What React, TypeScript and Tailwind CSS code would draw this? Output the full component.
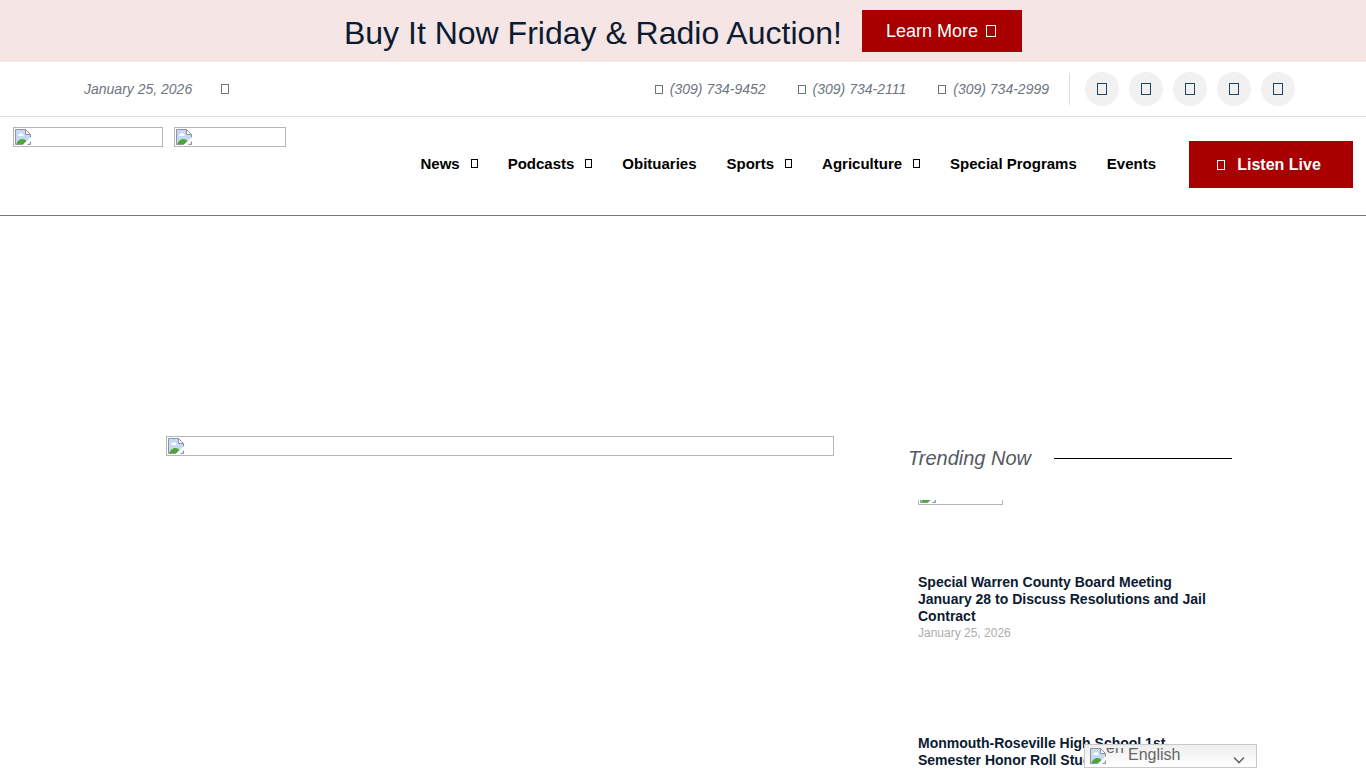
import { clsx } from "clsx";

type NavItem = {
  label: string;
  hasMenu?: boolean;
};

const navItems: NavItem[] = [
  { label: "News", hasMenu: true },
  { label: "Podcasts", hasMenu: true },
  { label: "Obituaries" },
  { label: "Sports", hasMenu: true },
  { label: "Agriculture", hasMenu: true },
  { label: "Special Programs" },
  { label: "Events" },
];

const phones = ["(309) 734-9452", "(309) 734-2111", "(309) 734-2999"];

const socials = ["Facebook", "Twitter", "Instagram", "YouTube", "Email"];

const stories = [
  {
    title: "Special Warren County Board Meeting January 28 to Discuss Resolutions and Jail Contract",
    date: "January 25, 2026",
    hasThumb: true,
  },
  {
    title: "Monmouth-Roseville High School 1st Semester Honor Roll Students",
    date: "January 25, 2026",
    hasThumb: false,
  },
];

// Hollow box shown where the icon font has no glyph.
function Glyph({ className }: { className: string }) {
  return <span aria-hidden="true" className={clsx("inline-block shrink-0 border border-current", className)} />;
}

function BrokenIcon({ className }: { className?: string }) {
  return (
    <svg aria-hidden="true" viewBox="0 0 16 16" className={clsx("block size-4 shrink-0", className)}>
      <path d="M0.5 0.5H10.500L15.500 5.500V15.500H0.500Z" fill="#c5d9f7" />
      <path d="M3 6.500c0-1.200 1-1.800 1.900-1.500C5.500 3.600 8 3.900 8 5.700c1 0 1 1.300 0 1.300H3.500Z" fill="#fff" />
      <path d="M1.500 15c.5-2.500 3-5 6-5 2 0 3.500 1 4 2.500L9 15Z" fill="#4ea63a" />
      <path d="M10.500 0.500V5.500H15.500Z" fill="#fff" />
      <path d="M0.500 15.500V0.500H10.500L15.500 5.500V15.500ZM10.500 0.500V5.500H15.500" fill="none" stroke="#8f9499" />
      <path d="M7.500 16 16 8V12L12 16Z" fill="#fff" />
    </svg>
  );
}

function ImageFrame({ className, label }: { className: string; label: string }) {
  return (
    <div role="img" aria-label={label} className={clsx("h-5 border border-[#b5b5b5] p-px", className)}>
      <BrokenIcon />
    </div>
  );
}

function PromoBanner() {
  return (
    <div className="flex items-center justify-center gap-5 bg-[#f6e5e5] py-[10px]">
      <h2 className="pt-1 text-[32px] leading-[38px] text-[#0b1b32]">Buy It Now Friday &amp; Radio Auction!</h2>
      <a href="#auction" className="flex h-[42px] items-center gap-2 bg-[#a80000] px-6 text-lg text-white">
        Learn More
        <Glyph className="mr-[2px] h-3 w-[10px]" />
      </a>
    </div>
  );
}

function TopBar() {
  return (
    <div className="flex items-center justify-between border-b border-[#dcdfe1] py-[10px] pr-[71px] pl-[84px] text-sm text-[#6b7680] italic">
      <div className="flex items-center gap-[29px]">
        <span>January 25, 2026</span>
        <Glyph className="h-[10px] w-2" />
      </div>
      <div className="flex items-center">
        <ul className="flex gap-8 pr-5">
          {phones.map((phone) => (
            <li key={phone}>
              <a href={`tel:${phone}`} className="flex items-center gap-[7px]">
                <Glyph className="h-[9px] w-2" />
                {phone}
              </a>
            </li>
          ))}
        </ul>
        <div className="h-8 border-l border-[#dcdfe1]" />
        <ul className="flex gap-[10px] pl-[15px]">
          {socials.map((name) => (
            <li key={name}>
              <a
                href={`#${name.toLowerCase()}`}
                aria-label={name}
                className="flex size-[34px] items-center justify-center rounded-full bg-[#f1f1f1] text-[#1d4262]"
              >
                <Glyph className="h-3 w-[10px]" />
              </a>
            </li>
          ))}
        </ul>
      </div>
    </div>
  );
}

function SiteHeader() {
  return (
    <header className="flex justify-between border-b border-[#74746f] px-[13px] pt-[10px] pb-[27px]">
      <div className="flex gap-[11px]">
        <ImageFrame className="w-[150px]" label="Station logo" />
        <ImageFrame className="w-28" label="Partner logo" />
      </div>
      <div className="flex items-center gap-[33px] pt-[14px]">
        <nav className="pb-[2px]">
          <ul className="flex gap-[30px] text-[15px] leading-5 font-bold text-black">
            {navItems.map((item) => (
              <li key={item.label}>
                <a href="#" className="flex items-center gap-[11px]">
                  {item.label}
                  {item.hasMenu ? <Glyph className="h-[9px] w-[7px]" /> : null}
                </a>
              </li>
            ))}
          </ul>
        </nav>
        <a
          href="#listen"
          className="flex h-[47px] w-[164px] items-center justify-center gap-3 bg-[#a80000] pr-1 text-base font-bold text-white"
        >
          <Glyph className="h-[10px] w-2" />
          Listen Live
        </a>
      </div>
    </header>
  );
}

function Trending() {
  return (
    <aside className="w-[324px] shrink-0">
      <div className="flex items-center gap-[23px]">
        <h2 className="text-xl leading-11 text-[#54595f] italic">Trending Now</h2>
        <div className="flex-1 border-t border-black" />
      </div>
      <div className="flex flex-col gap-5 px-[10px] pt-5">
        {stories.map((story) => (
          <article key={story.title}>
            <div className="h-16">
              {story.hasThumb ? (
                <div className="flex h-[5px] flex-col justify-end overflow-hidden">
                  <ImageFrame className="w-[85px] shrink-0" label={story.title} />
                </div>
              ) : null}
            </div>
            <h3 className="mt-[10px] text-sm leading-[17px] font-bold text-[#0b1b32]">
              <a href="#">{story.title}</a>
            </h3>
            <p className="text-xs text-[#adadad]">{story.date}</p>
          </article>
        ))}
      </div>
    </aside>
  );
}

function LanguagePicker() {
  return (
    <div className="fixed right-[109px] bottom-0 h-6 w-[173px] text-base text-[#666]">
      <select
        aria-label="Language"
        defaultValue="en"
        className="block h-6 w-full appearance-none border border-[#c8c8c8] bg-linear-to-b from-[#eeeeee] to-white pb-[2px] pl-[43px] leading-5"
      >
        <option value="en">English</option>
      </select>
      {/* flag image slot, alt text clipped at its top edge */}
      <div className="pointer-events-none absolute top-1 left-[6px] flex h-4 items-start overflow-hidden">
        <BrokenIcon />
        <span className="-mt-[10px] leading-5">en</span>
      </div>
      <svg aria-hidden="true" viewBox="0 0 12 8" className="pointer-events-none absolute right-3 bottom-1 h-2 w-3">
        <path d="M1 1.500 6 6.500 11 1.500" fill="none" stroke="#666" strokeWidth="1.600" />
      </svg>
    </div>
  );
}

export default function App() {
  return (
    <div className="bg-white font-['Liberation_Sans',Arial,sans-serif]">
      <PromoBanner />
      <TopBar />
      <SiteHeader />
      <main className="mx-auto flex max-w-[1098px] items-start gap-[74px] pt-[220px] pl-8">
        <ImageFrame className="flex-1" label="Featured story" />
        <Trending />
      </main>
      <LanguagePicker />
    </div>
  );
}
